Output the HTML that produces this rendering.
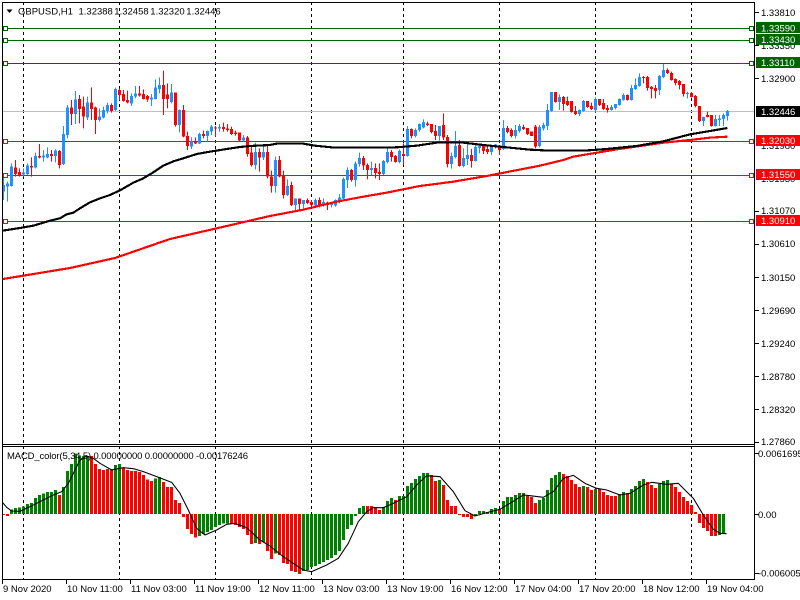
<!DOCTYPE html>
<html><head><meta charset="utf-8"><style>
html,body{margin:0;padding:0;background:#fff;width:800px;height:600px;overflow:hidden}
svg{display:block;position:absolute;left:0;top:0}
text{font-family:"Liberation Sans",sans-serif;font-size:9.5px;fill:#000}
.w{fill:#fff}
</style></head><body>
<svg width="800" height="600" viewBox="0 0 800 600" xmlns="http://www.w3.org/2000/svg">
<rect width="800" height="600" fill="#fff"/>
<g shape-rendering="crispEdges">
<path d="M23.5 2V579M119.5 2V579M215.5 2V579M311.5 2V579M403.5 2V579M499.5 2V579M595.5 2V579M691.5 2V579" stroke="#000" stroke-dasharray="3 3" fill="none"/>
<path d="M3 111.5H754" stroke="#c0c0c0"/>
<path d="M3 28.5H754M3 40.5H754M3 63.5H754" stroke="#006400"/>
<path d="M3 141.5H754M3 175.5H754M3 221.5H754" stroke="#f00"/>
<!-- candles section 1 -->
<g transform="scale(1 .33333)" fill="none">
<path stroke="#1e90ff" d="M3.5 530V600M7.5 545V605M11.5 490V560M23.5 505V530M27.5 490V525M35.5 458V505M43.5 450V485M47.5 442V475M55.5 448V487M63.5 378V495M67.5 315V415M75.5 273V372M87.5 290V360M99.5 325V365M103.5 320V355M107.5 308V340M115.5 263V333M131.5 280V318M135.5 258V295M151.5 282V318M155.5 238V298M159.5 232V280M171.5 252V310M179.5 328V397M191.5 412V447M199.5 398V432M207.5 392V425M211.5 375V405M219.5 372V395M243.5 405V425M255.5 428V508M263.5 435V480"/>
<path stroke="#1e90ff" stroke-width="3" d="M3.5 555V575M7.5 550V560M11.5 500V558M23.5 518V523M27.5 497V522M35.5 468V503M43.5 467V473M47.5 462V472M55.5 452V468M63.5 402V492M67.5 323V405M75.5 298V342M87.5 308V352M99.5 350V360M103.5 330V353M107.5 315V333M115.5 267V330M131.5 288V310M135.5 280V290M151.5 293V298M155.5 263V297M159.5 255V267M171.5 278V306M179.5 330V375M191.5 425V440M199.5 402V430M207.5 393V408M211.5 380V395M219.5 381V386M243.5 412V422M255.5 456V495M263.5 456V472"/>
<path stroke="#f00" d="M15.5 480V530M19.5 505V530M31.5 472V530M39.5 432V475M51.5 450V485M59.5 450V505M71.5 300V375M79.5 285V370M83.5 290V385M91.5 262V360M95.5 320V402M111.5 310V338M119.5 265V300M123.5 270V305M127.5 272V310M139.5 258V290M143.5 268V298M147.5 285V305M163.5 212V345M167.5 250V325M175.5 278V380M183.5 315V412M187.5 395V450M195.5 412V432M203.5 392V415M215.5 378V410M223.5 368V395M227.5 372V395M231.5 380V405M235.5 392V407M239.5 398V425M247.5 408V470M251.5 440V500M259.5 445V515M267.5 435V535"/>
<path stroke="#f00" stroke-width="3" d="M15.5 502V522M19.5 516V526M31.5 498V503M39.5 468V473M51.5 462V468M59.5 453V495M71.5 323V342M79.5 297V327M83.5 320V350M91.5 308V327M95.5 323V360M111.5 315V333M119.5 270V285M123.5 282V303M127.5 300V308M139.5 280V286M143.5 282V297M147.5 288V298M163.5 255V297M167.5 283V297M175.5 278V375M183.5 330V410M187.5 408V438M195.5 425V430M203.5 402V408M215.5 383V386M223.5 381V387M227.5 386V390M231.5 387V402M235.5 398V402M239.5 398V422M247.5 413V462M251.5 458V495M259.5 456V472M267.5 456V530"/>
</g>
<!-- candles section 2 -->
<g transform="translate(0 50) scale(1 .33333)" fill="none">
<path stroke="#1e90ff" d="M275.5 320V428M287.5 388V438M295.5 445V480M303.5 450V475M315.5 445V470M323.5 445V470M331.5 458V472M335.5 448V470M339.5 432V460M343.5 383V447M347.5 352V414M355.5 335V410M359.5 308V350M371.5 335V375M383.5 330V375M387.5 295V340M399.5 298V340M407.5 228V320M415.5 235V262M419.5 220V245M423.5 208V235M439.5 228V272M451.5 308V356M455.5 243V325M463.5 295V352M467.5 275V345M475.5 285V335M479.5 280V310M491.5 285V315M495.5 282V296M503.5 210V300M515.5 225V265M519.5 222V248M539.5 225V292"/>
<path stroke="#1e90ff" stroke-width="3" d="M275.5 330V408M287.5 408V435M295.5 445V465M303.5 450V462M315.5 450V466M323.5 456V466M331.5 460V465M335.5 450V466M339.5 442V455M343.5 387V445M347.5 360V390M355.5 340V390M359.5 324V342M371.5 354V360M383.5 333V372M387.5 306V336M399.5 303V336M407.5 237V318M415.5 240V258M419.5 222V240M423.5 216V232M439.5 228V258M451.5 318V342M455.5 288V321M463.5 324V348M467.5 315V327M475.5 291V333M479.5 288V294M491.5 291V306M495.5 284V293M503.5 234V297M515.5 240V258M519.5 228V243M539.5 231V288"/>
<path stroke="#f00" d="M271.5 362V428M279.5 318V382M283.5 362V445M291.5 395V468M299.5 445V478M307.5 445V462M311.5 450V468M319.5 442V472M327.5 455V480M351.5 357V395M363.5 318V360M367.5 340V388M375.5 340V385M379.5 340V390M391.5 300V335M395.5 315V338M403.5 280V345M411.5 235V265M427.5 215V228M431.5 222V250M435.5 225V270M443.5 190V270M447.5 255V352M459.5 270V350M471.5 297V353M483.5 285V312M487.5 285V312M499.5 285V315M507.5 228V250M511.5 235V262M523.5 224V240M527.5 234V255"/>
<path stroke="#f00" stroke-width="3" d="M271.5 380V408M279.5 330V380M283.5 378V435M291.5 405V465M299.5 445V462M307.5 450V459M311.5 456V465M319.5 450V468M327.5 457V465M351.5 360V390M363.5 324V346M367.5 345V360M375.5 354V369M379.5 366V372M391.5 306V321M395.5 318V336M403.5 312V318M411.5 237V258M427.5 220V225M431.5 222V246M435.5 243V258M443.5 225V263M447.5 261V342M459.5 285V348M471.5 315V333M483.5 288V303M487.5 297V306M499.5 291V300M507.5 234V246M511.5 240V258M523.5 231V237M527.5 234V252"/>
</g>
<!-- candles section 3 -->
<g transform="scale(1 .33333)" fill="none">
<path stroke="#1e90ff" d="M543.5 368V392M547.5 312V390M551.5 276V335M559.5 283V330M579.5 328V348M583.5 300V335M595.5 292V338M611.5 315V332M615.5 312V328M619.5 295V317M623.5 280V302M631.5 255V302M635.5 235V270M639.5 220V260M659.5 225V285M663.5 192V234M687.5 275V295M703.5 350V378M715.5 345V380M719.5 345V378M723.5 340V378M727.5 330V362"/>
<path stroke="#1e90ff" stroke-width="3" d="M543.5 375V385M547.5 330V378M551.5 276V333M559.5 291V306M579.5 330V342M583.5 303V333M595.5 297V330M611.5 321V330M615.5 312V324M619.5 297V315M623.5 285V300M631.5 264V300M635.5 255V267M639.5 231V258M659.5 228V270M663.5 210V231M687.5 279V282M703.5 351V363M715.5 357V378M719.5 355V360M723.5 345V357M727.5 333V348"/>
<path stroke="#f00" d="M531.5 395V408M535.5 375V445M555.5 276V308M563.5 288V332M567.5 290V318M571.5 303V338M575.5 318V345M587.5 303V324M591.5 308V330M599.5 297V318M603.5 297V330M607.5 315V338M627.5 283V302M643.5 228V250M647.5 228V272M651.5 258V295M655.5 255V295M667.5 205V222M671.5 215V242M675.5 235V256M679.5 240V268M683.5 252V290M691.5 276V292M695.5 285V322M699.5 318V366M707.5 335V352M711.5 345V380"/>
<path stroke="#f00" stroke-width="3" d="M531.5 395V408M535.5 380V440M555.5 276V306M563.5 291V312M567.5 303V315M571.5 303V336M575.5 333V342M587.5 303V321M591.5 318V327M599.5 297V315M603.5 309V327M607.5 324V330M627.5 285V300M643.5 231V234M647.5 231V264M651.5 261V267M655.5 264V273M667.5 210V219M671.5 219V240M675.5 237V249M679.5 243V255M683.5 252V282M691.5 279V291M695.5 288V318M699.5 318V363M707.5 345V351M711.5 345V378"/>
</g>
<!-- MAs -->
<g transform="scale(.33333)" fill="none" stroke-linejoin="round">
<path stroke="#f00" stroke-width="6.5" d="M9 837L210 804L345 774L510 717L650 685L810 648L910 629L1010 605L1090 590L1160 578L1260 558L1360 545L1460 528L1620 497L1690 480L1720 470L1850 448L1990 428L2070 420L2130 413L2182 410"/>
<path stroke="#000" stroke-width="6.5" d="M8 692L60 684L100 677L150 662L180 655L200 643L220 638L240 625L270 607L300 595L330 585L360 571L400 548L430 535L460 517L490 497L520 484L550 475L590 462L630 455L680 447L720 441L750 438L810 435L830 431L910 431L945 437L1005 443L1190 442L1250 437L1310 428L1390 428L1450 435L1500 440L1590 449L1650 452L1750 452L1820 447L1910 438L1990 424L2070 403L2130 393L2182 384"/>
</g>
<!-- MACD bars -->
<g transform="translate(0 440) scale(1 .33333)" fill="none" stroke-width="3">
<path stroke="#008000" d="M11.5 222V208M15.5 222V204M19.5 222V202M23.5 222V200M27.5 222V192M31.5 222V189M35.5 222V174M39.5 222V165M43.5 222V160M47.5 222V156M51.5 222V156M55.5 222V150M63.5 222V141M67.5 222V93M71.5 222V72M75.5 222V40M79.5 222V46M83.5 222V48M87.5 222V48M115.5 222V75M119.5 222V72M155.5 222V115M159.5 222V111M199.5 222V288M203.5 222V282M207.5 222V276M211.5 222V270M215.5 222V261M219.5 222V255M223.5 222V250M227.5 222V250M255.5 222V309M263.5 222V306M275.5 222V340M303.5 222V393M307.5 222V390M311.5 222V381M315.5 222V378M319.5 222V372M323.5 222V366M327.5 222V360M331.5 222V354M335.5 222V345M339.5 222V333M343.5 222V300M347.5 222V267M351.5 222V255M355.5 222V228M359.5 222V204M363.5 222V198M383.5 222V201M387.5 222V183M391.5 222V174M399.5 222V168M403.5 222V168M407.5 222V138M411.5 222V129M415.5 222V117M419.5 222V108M423.5 222V99M427.5 222V99M439.5 222V120M475.5 222V228M479.5 222V213M483.5 222V213M491.5 222V207M495.5 222V204M503.5 222V183M507.5 222V171M511.5 222V171M515.5 222V165M519.5 222V159M523.5 222V159M539.5 222V180M543.5 222V174M547.5 222V150M551.5 222V114M555.5 222V105M559.5 222V96M583.5 222V138M595.5 222V147M619.5 222V162M623.5 222V156M631.5 222V147M635.5 222V138M639.5 222V123M643.5 222V117M659.5 222V132M663.5 222V123M667.5 222V120M719.5 222V285M723.5 222V282"/>
<path stroke="#f00" d="M3.5 222V225M7.5 222V228M59.5 222V165M91.5 222V48M95.5 222V72M99.5 222V87M103.5 222V90M107.5 222V87M111.5 222V87M123.5 222V82M127.5 222V90M131.5 222V93M135.5 222V93M139.5 222V96M143.5 222V105M147.5 222V118M151.5 222V123M163.5 222V126M167.5 222V141M171.5 222V141M175.5 222V180M179.5 222V189M183.5 222V231M187.5 222V267M191.5 222V282M195.5 222V293M231.5 222V250M235.5 222V255M239.5 222V261M243.5 222V267M247.5 222V285M251.5 222V312M259.5 222V312M267.5 222V333M271.5 222V357M279.5 222V345M283.5 222V369M287.5 222V372M291.5 222V393M295.5 222V396M299.5 222V402M367.5 222V198M371.5 222V198M375.5 222V204M379.5 222V210M395.5 222V180M431.5 222V105M435.5 222V123M443.5 222V135M447.5 222V180M451.5 222V198M455.5 222V198M459.5 222V225M463.5 222V231M467.5 222V231M471.5 222V237M487.5 222V216M499.5 222V207M527.5 222V168M531.5 222V171M535.5 222V189M563.5 222V102M567.5 222V108M571.5 222V120M575.5 222V132M579.5 222V141M587.5 222V141M591.5 222V150M599.5 222V147M603.5 222V156M607.5 222V165M611.5 222V168M615.5 222V168M627.5 222V159M647.5 222V126M651.5 222V135M655.5 222V144M671.5 222V132M675.5 222V141M679.5 222V156M683.5 222V171M687.5 222V183M691.5 222V195M695.5 222V216M699.5 222V249M703.5 222V264M707.5 222V273M711.5 222V288M715.5 222V288"/>
</g>
</g>
<!-- signal line -->
<g transform="translate(0 440) scale(.33333)" fill="none" stroke="#000" stroke-width="3.2" stroke-linejoin="round">
<path d="M8 188L20 202L35 213L60 214L90 200L130 180L160 165L185 155L205 130L220 100L240 60L260 48L280 55L300 70L335 90L370 83L400 86L430 95L470 110L515 127L540 160L565 210L590 265L615 285L650 270L680 253L705 250L740 263L780 300L810 318L850 350L880 370L910 390L935 395L980 375L1015 355L1045 310L1075 245L1100 215L1120 203L1150 203L1180 190L1220 170L1250 135L1280 107L1320 110L1360 155L1395 212L1425 228L1460 218L1500 208L1530 190L1570 165L1590 167L1630 172L1660 155L1690 115L1720 106L1755 130L1790 145L1820 150L1860 165L1890 160L1930 135L1955 127L2000 133L2035 130L2080 175L2110 225L2140 268L2160 280L2180 281"/>
</g>
<!-- squares -->
<g shape-rendering="crispEdges" fill="#fff">
<g stroke="#006400"><rect x="3.5" y="26.5" width="4" height="4"/><rect x="3.5" y="38.5" width="4" height="4"/><rect x="3.5" y="61.5" width="4" height="4"/><rect x="749.5" y="26.5" width="4" height="4"/><rect x="749.5" y="38.5" width="4" height="4"/><rect x="749.5" y="61.5" width="4" height="4"/></g>
<g stroke="#f00"><rect x="3.5" y="139.5" width="4" height="4"/><rect x="3.5" y="173.5" width="4" height="4"/><rect x="3.5" y="219.5" width="4" height="4"/><rect x="749.5" y="139.5" width="4" height="4"/><rect x="749.5" y="173.5" width="4" height="4"/><rect x="749.5" y="219.5" width="4" height="4"/></g>
</g>
<!-- frame -->
<g shape-rendering="crispEdges" fill="none" stroke="#000">
<path d="M2.5 2.5H754.5V579.5H2.5ZM2.5 444.5H754.5M2.5 446.5H754.5"/>
<path d="M755 12.5H759M755 45.5H759M755 78.5H759M755 211.5H759M755 244.5H759M755 277.5H759M755 310.5H759M755 343.5H759M755 376.5H759M755 409.5H759M755 442.5H759M755 453.5H759M755 514.5H759M755 573.5H759"/>
<path d="M2.5 580V584M66.5 580V584M130.5 580V584M194.5 580V584M258.5 580V584M322.5 580V584M386.5 580V584M450.5 580V584M514.5 580V584M578.5 580V584M642.5 580V584M706.5 580V584"/>
</g>
<path d="M6.5 9.5h6l-3 3.5z" fill="#000"/>
<!-- title -->
<text x="18" y="14.5">GBPUSD,H1</text><text x="78.5" y="14.5">1.32388</text><text x="114.3" y="14.5">1.32458</text><text x="150.3" y="14.5">1.32320</text><text x="186.3" y="14.5">1.32446</text>
<text x="7" y="459" textLength="241" lengthAdjust="spacing">MACD_color(5,34,5) 0.00000000 0.00000000 -0.00176246</text>
<!-- price axis -->
<text x="761" y="16">1.33810</text><text x="761" y="49">1.33350</text><text x="761" y="82">1.32900</text><text x="761" y="149">1.31980</text><text x="761" y="182">1.31530</text><text x="761" y="214">1.31070</text><text x="761" y="247">1.30610</text><text x="761" y="281">1.30150</text><text x="761" y="314">1.29690</text><text x="761" y="347">1.29240</text><text x="761" y="380">1.28780</text><text x="761" y="413">1.28320</text><text x="761" y="445">1.27860</text>
<g shape-rendering="crispEdges">
<rect x="756" y="22" width="44" height="11" fill="#006400"/><rect x="756" y="34" width="44" height="11" fill="#006400"/><rect x="756" y="57" width="44" height="11" fill="#006400"/><rect x="756" y="106" width="44" height="11" fill="#000"/><rect x="756" y="135" width="44" height="11" fill="#f00"/><rect x="756" y="169" width="44" height="11" fill="#f00"/><rect x="756" y="215" width="44" height="11" fill="#f00"/>
</g>
<text class="w" x="761" y="31.5">1.33590</text><text class="w" x="761" y="43">1.33430</text><text class="w" x="761" y="66">1.33110</text><text class="w" x="761" y="115">1.32446</text><text class="w" x="761" y="144">1.32030</text><text class="w" x="761" y="178">1.31550</text><text class="w" x="761" y="224">1.30910</text>
<text x="758" y="457">0.0061695</text><text x="758" y="518">0.00</text><text x="758" y="576.5">-0.0060053</text>
<!-- time axis -->
<text x="3" y="592">9 Nov 2020</text><text x="67" y="592">10 Nov 11:00</text><text x="131" y="592">11 Nov 03:00</text><text x="195" y="592">11 Nov 19:00</text><text x="259" y="592">12 Nov 11:00</text><text x="323" y="592">13 Nov 03:00</text><text x="387" y="592">13 Nov 19:00</text><text x="451" y="592">16 Nov 12:00</text><text x="515" y="592">17 Nov 04:00</text><text x="579" y="592">17 Nov 20:00</text><text x="643" y="592">18 Nov 12:00</text><text x="707" y="592">19 Nov 04:00</text>
</svg>
</body></html>
